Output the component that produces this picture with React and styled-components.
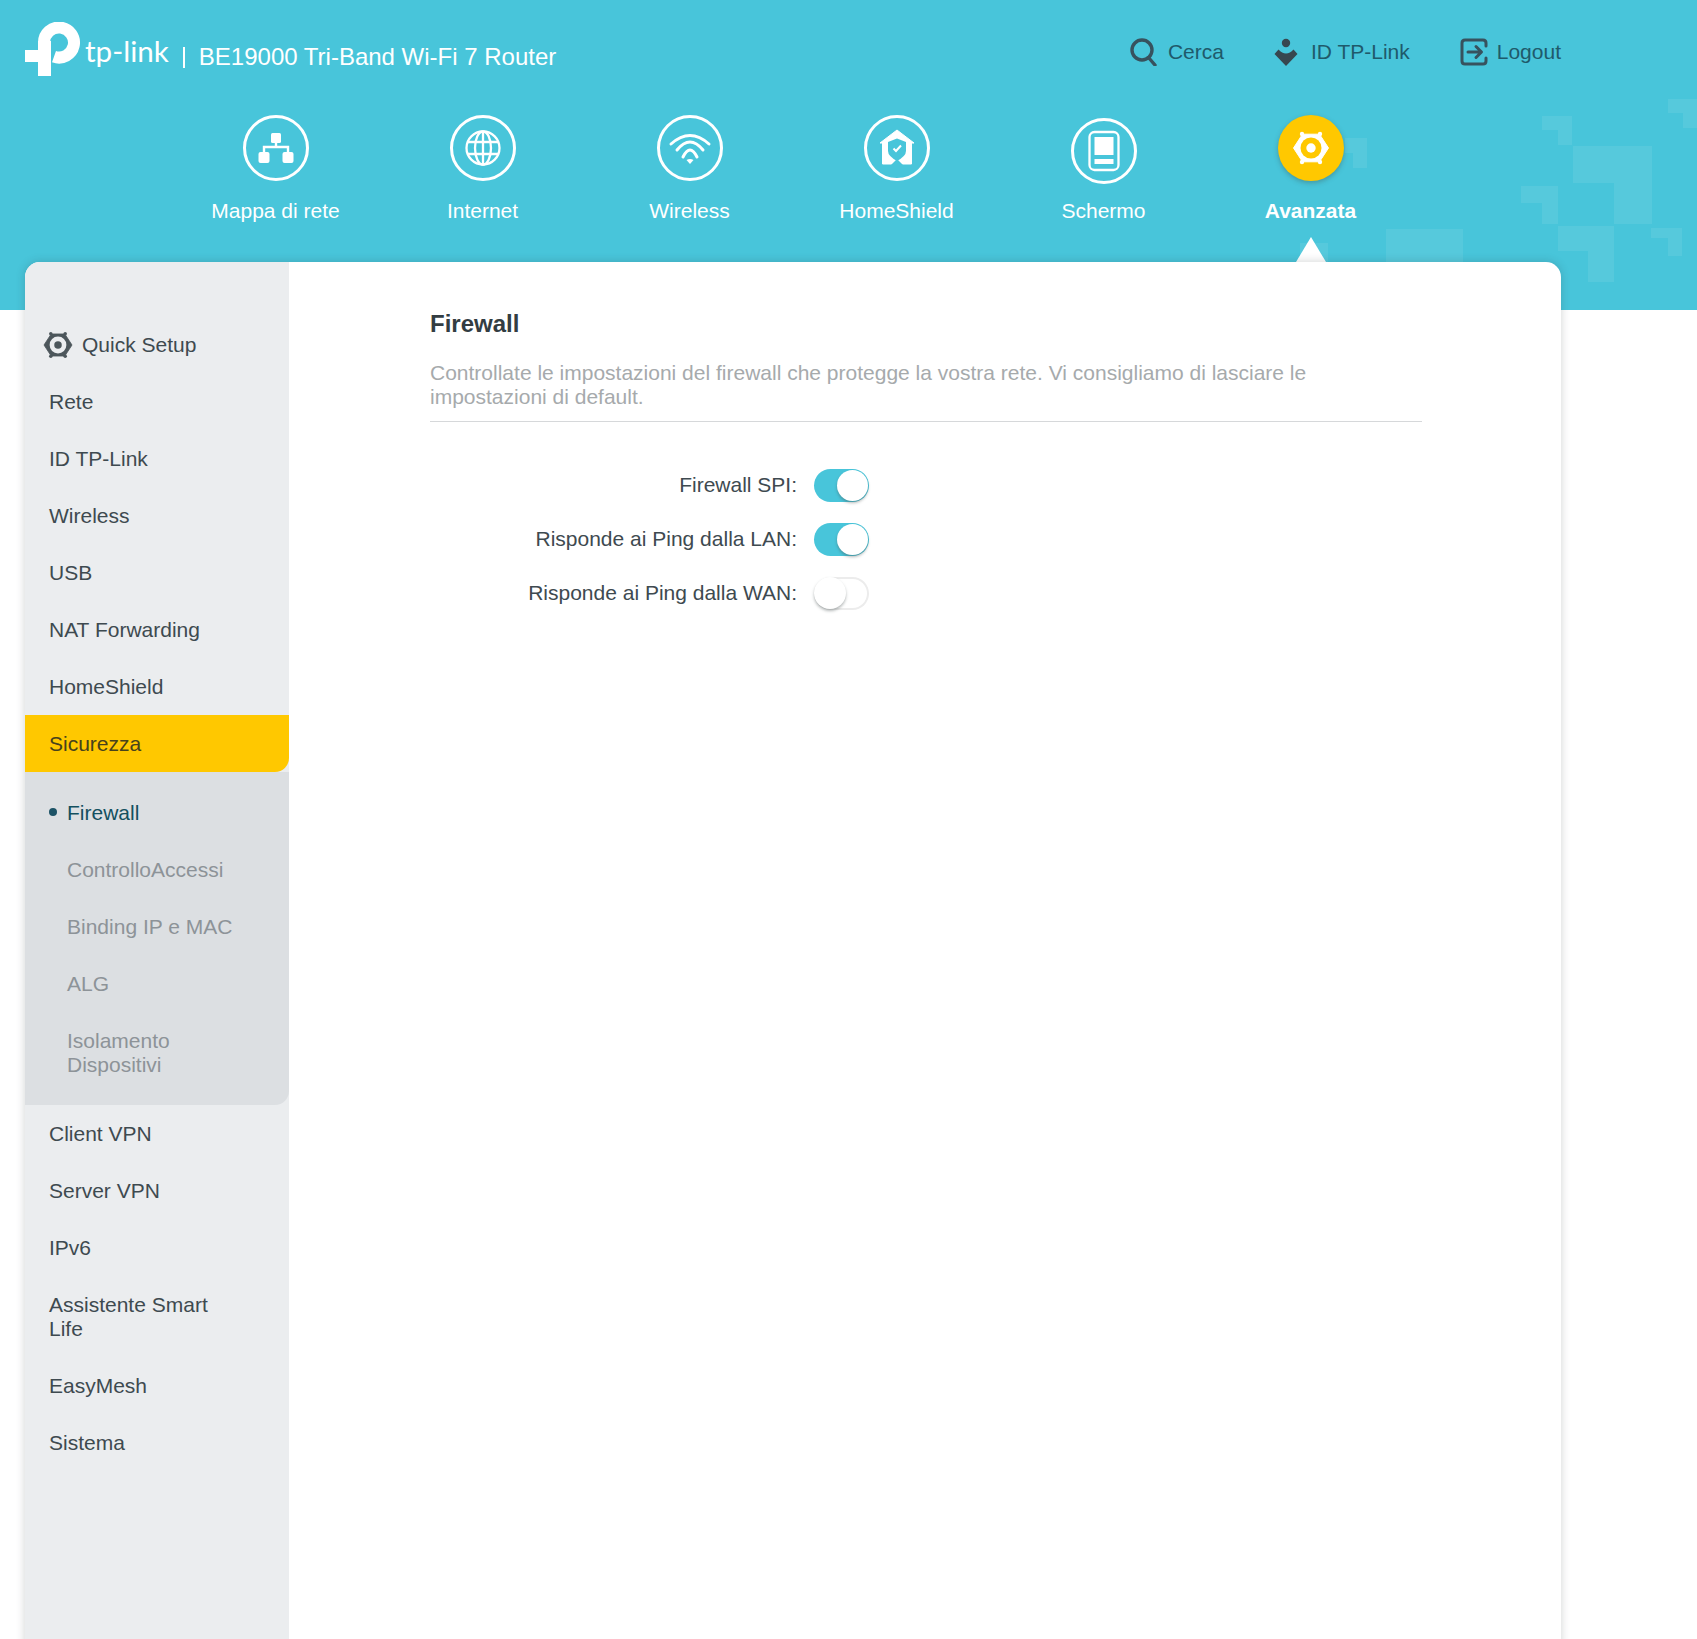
import React from 'react';
import styled, { createGlobalStyle } from 'styled-components';

const TEAL = '#48c5da';
const YELLOW = '#ffc800';
const INK = '#3e4a50';

const GlobalStyle = createGlobalStyle`
  html, body {
    margin: 0;
    padding: 0;
    background: #fff;
  }
  body {
    font-family: 'Liberation Sans', Arial, sans-serif;
    color: ${INK};
  }
  * {
    box-sizing: border-box;
  }
`;

const Page = styled.div`
  width: 1697px;
  height: 1639px;
  overflow: hidden;
`;

const Header = styled.header`
  position: relative;
  height: 310px;
  padding: 0 136px 0 25px;
  background: ${TEAL};
`;

const Pattern = styled.svg`
  position: absolute;
  top: 0;
  left: 0;
  pointer-events: none;
`;

const TopBar = styled.div`
  position: relative;
  display: flex;
  align-items: center;
  justify-content: space-between;
  height: 104px;
`;

const Brand = styled.div`
  display: flex;
  align-items: center;
  color: #fff;
  margin-top: -6px;
`;

const BrandName = styled.span`
  margin-left: 4px;
  padding-top: 4px;
  font-family: 'Lato', sans-serif;
  font-size: 29.6px;
  font-weight: 400;
  line-height: 34px;
`;

const Separator = styled.span`
  width: 2px;
  height: 21px;
  margin: 16px 14px 0 14px;
  background: #fff;
`;

const ProductName = styled.span`
  margin-top: 16px;
  font-size: 24px;
  line-height: 28px;
`;

const Actions = styled.div`
  display: flex;
  gap: 50px;
`;

const Action = styled.a`
  display: flex;
  align-items: center;
  gap: ${(p) => p.$gap}px;
  font-size: 21px;
  line-height: 28px;
  color: #1f5a6b;
`;

const Nav = styled.nav`
  position: relative;
  display: flex;
  justify-content: center;
  margin-top: 11px;
`;

const NavItem = styled.div`
  display: flex;
  flex-direction: column;
  align-items: center;
  width: 207px;
  color: #fff;
  font-size: 21px;
  font-weight: ${(p) => (p.$active ? 700 : 400)};
`;

const NavCircle = styled.div`
  display: flex;
  align-items: center;
  justify-content: center;
  width: 66px;
  height: 66px;
  margin-top: ${(p) => (p.$low ? 3 : 0)}px;
  margin-bottom: ${(p) => (p.$low ? -3 : 0)}px;
  border: ${(p) => (p.$active ? 'none' : '3px solid #fff')};
  border-radius: 50%;
  background: ${(p) => (p.$active ? YELLOW : 'transparent')};
  box-shadow: ${(p) => (p.$active ? '0 2px 5px rgba(60, 70, 60, 0.35)' : 'none')};
`;

const NavLabel = styled.span`
  margin-top: 18px;
  line-height: 24px;
`;

const Pointer = styled.span`
  position: absolute;
  top: 237px;
  left: 1296px;
  width: 0;
  height: 0;
  border-left: 15px solid transparent;
  border-right: 15px solid transparent;
  border-bottom: 25px solid #fff;
`;

const Card = styled.main`
  position: relative;
  display: flex;
  width: 1536px;
  height: 1400px;
  margin: -48px 0 0 25px;
  border-radius: 15px 15px 0 0;
  background: #fff;
  box-shadow: 0 0 10px rgba(40, 50, 60, 0.22);
  overflow: hidden;
`;

const Sidebar = styled.aside`
  flex: 0 0 264px;
  padding-top: 53.5px;
  background: #ebedef;
`;

const MenuItem = styled.div`
  display: flex;
  align-items: center;
  gap: 8px;
  padding: 17.5px 44px 15.5px ${(p) => (p.$icon ? 17 : 24)}px;
  font-size: 21px;
  line-height: 24px;
  color: ${(p) => (p.$active ? '#47421c' : INK)};
  background: ${(p) => (p.$active ? YELLOW : 'transparent')};
  border-bottom-right-radius: ${(p) => (p.$active ? 14 : 0)}px;

  svg {
    display: block;
    margin: -4px 0;
  }
`;

const SubMenu = styled.div`
  padding: 12px 0;
  background: #dcdfe2;
  border-bottom-right-radius: 14px;
`;

const SubItem = styled.div`
  position: relative;
  padding: 17.5px 44px 15.5px 42px;
  font-size: 21px;
  line-height: 24px;
  color: ${(p) => (p.$active ? '#13505f' : '#8d9398')};
`;

const SubDot = styled.span`
  position: absolute;
  top: 24.5px;
  left: 24px;
  width: 8px;
  height: 8px;
  border-radius: 50%;
  background: #1d5366;
`;

const Content = styled.section`
  flex: 1;
  padding: 48px 139px 0 141px;
`;

const Title = styled.h2`
  margin: 0;
  font-size: 24px;
  font-weight: 700;
  line-height: 28px;
  color: #333d42;
`;

const Description = styled.p`
  margin: 23px 0 0;
  padding-bottom: 12px;
  border-bottom: 1px solid #d6d8da;
  font-size: 21px;
  line-height: 24px;
  color: #a6aaac;

  span {
    display: block;
  }
`;

const Settings = styled.div`
  margin-top: 36px;
`;

const SettingRow = styled.div`
  display: flex;
  align-items: center;
  gap: 17px;
  height: 54px;
`;

const SettingLabel = styled.label`
  width: 367px;
  text-align: right;
  font-size: 21px;
  line-height: 24px;
  color: ${INK};
`;

const Toggle = styled.div`
  display: flex;
  justify-content: ${(p) => (p.$on ? 'flex-end' : 'flex-start')};
  width: 55px;
  height: 33px;
  padding: ${(p) => (p.$on ? '1px 1px 1px 0' : '0')};
  border-radius: 17px;
  background: ${(p) => (p.$on ? TEAL : '#fff')};
  box-shadow: ${(p) => (p.$on ? 'none' : 'inset 0 0 0 2px #ececec')};
`;

const Knob = styled.span`
  width: ${(p) => (p.$on ? 31 : 32)}px;
  height: ${(p) => (p.$on ? 31 : 32)}px;
  border-radius: 50%;
  background: #fff;
  box-shadow: 0 2px 3px rgba(70, 80, 80, 0.4);
`;

const patternShapes = [
  'M1668 99H1697V128H1683V113H1668Z',
  'M1542 116H1572V145H1558V130H1542Z',
  'M1573 146H1652V224H1614V183H1573Z',
  'M1521 186H1558V224H1542V203H1521Z',
  'M1558 226H1614V282H1588V251H1558Z',
  'M1651 228H1682V256H1668V238H1651Z',
  'M1386 229H1463V262H1386Z',
  'M1345 138H1367V168H1353V153H1345Z',
  'M1300 243H1328V262H1300Z',
];

const Logo = () => (
  <svg width="56" height="54" viewBox="0 0 56 54">
    <path d="M13 19H26V54H13ZM0 28H26V40H0Z" fill="#fff" />
    <path d="M19 20.5A15 15 0 1 1 29 34.7" fill="none" stroke="#fff" strokeWidth="12" />
  </svg>
);

const SearchIcon = () => (
  <svg width="28" height="28" viewBox="0 0 28 28" fill="none" stroke="#37525e" strokeWidth="3.4">
    <circle cx="13" cy="12" r="10" />
    <path d="M19.5 19.5L26 27" strokeLinecap="round" />
  </svg>
);

const AccountIcon = () => (
  <svg width="24" height="30" viewBox="0 0 24 30" fill="#37474f">
    <circle cx="12" cy="6" r="4.2" />
    <path d="M0.5 17L4.5 12.5Q8 16.5 12 16.5Q16 16.5 19.5 12.5L23.5 17L12 29Z" />
  </svg>
);

const LogoutIcon = () => (
  <svg width="28" height="28" viewBox="0 0 28 28" fill="none" stroke="#37525e" strokeWidth="3" strokeLinecap="round" strokeLinejoin="round">
    <path d="M26 8V5Q26 2 23 2H5Q2 2 2 5V23Q2 26 5 26H23Q26 26 26 23V20" />
    <path d="M8 14H21M16 8.5L21.5 14L16 19.5" />
  </svg>
);

const GearGlyph = ({ size, color, hole }) => (
  <svg width={size} height={size} viewBox="-20 -20 40 40">
    <path d="M-17.5 0L-8.5 -13.8H8.5L17.5 0L8.5 13.8H-8.5Z" fill={color} stroke={color} strokeWidth="1" strokeLinejoin="round" />
    <circle cx="-9" cy="-14" r="2.2" fill={color} />
    <circle cx="9" cy="-14" r="2.2" fill={color} />
    <circle cx="-9" cy="14" r="2.2" fill={color} />
    <circle cx="9" cy="14" r="2.2" fill={color} />
    <circle r="10.5" fill={hole} />
    <circle r="4.7" fill={color} />
  </svg>
);

const NavGlyph = ({ children }) => (
  <svg width="60" height="60" viewBox="-30 -30 60 60" fill="#fff">
    {children}
  </svg>
);

const navItems = [
  {
    label: 'Mappa di rete',
    glyph: (
      <NavGlyph>
        <rect x="-5" y="-15" width="10" height="10" rx="1.5" />
        <rect x="-17.5" y="4" width="11" height="11" rx="2" />
        <rect x="6.5" y="4" width="11" height="11" rx="2" />
        <path d="M0 -6V-1M-12 5V-1H12V5" fill="none" stroke="#fff" strokeWidth="2.4" />
      </NavGlyph>
    ),
  },
  {
    label: 'Internet',
    glyph: (
      <NavGlyph>
        <g fill="none" stroke="#fff" strokeWidth="2.3">
          <circle r="16.5" />
          <ellipse rx="8" ry="16.5" />
          <path d="M0 -16.5V16.5M-15 -6H15M-15 6H15" />
        </g>
      </NavGlyph>
    ),
  },
  {
    label: 'Wireless',
    glyph: (
      <NavGlyph>
        <g fill="none" stroke="#fff" strokeWidth="3" strokeLinecap="round">
          <path d="M-19 -4Q0 -21 19 -4" />
          <path d="M-13 2Q0 -14 13 2" />
          <path d="M-7 9Q0 -5 7 9" />
        </g>
        <path d="M-3.5 12Q0 10 3.5 12L0 16Z" />
      </NavGlyph>
    ),
  },
  {
    label: 'HomeShield',
    glyph: (
      <NavGlyph>
        <path d="M0 -18L17 -5H14.5V16H-14.5V-5H-17Z" stroke="#fff" strokeWidth="1" strokeLinejoin="round" />
        <path d="M-9 -6L0 -9.5L9 -6V3Q9 8 0 13Q-9 8 -9 3Z" fill={TEAL} />
        <path d="M-6 17L0 11L6 17Z" fill={TEAL} />
        <path d="M-3.5 0.5L-1 3L4 -2.5" fill="none" stroke="#fff" strokeWidth="2" />
      </NavGlyph>
    ),
  },
  {
    label: 'Schermo',
    low: true,
    glyph: (
      <NavGlyph>
        <rect x="-14.5" y="-19" width="29" height="38" rx="5" fill="none" stroke="#fff" strokeWidth="2.3" />
        <rect x="-9.5" y="-14" width="19" height="18" />
        <rect x="-9.5" y="8" width="19" height="5" />
      </NavGlyph>
    ),
  },
  {
    label: 'Avanzata',
    active: true,
    glyph: <GearGlyph size={40} color="#fff" hole={YELLOW} />,
  },
];

const topMenu = ['Rete', 'ID TP-Link', 'Wireless', 'USB', 'NAT Forwarding', 'HomeShield'];
const securityMenu = ['ControlloAccessi', 'Binding IP e MAC', 'ALG', 'Isolamento Dispositivi'];
const bottomMenu = ['Client VPN', 'Server VPN', 'IPv6', 'Assistente Smart Life', 'EasyMesh', 'Sistema'];

const settings = [
  { label: 'Firewall SPI:', on: true },
  { label: 'Risponde ai Ping dalla LAN:', on: true },
  { label: 'Risponde ai Ping dalla WAN:', on: false },
];

export default function App() {
  return (
    <Page>
      <GlobalStyle />
      <Header>
        <Pattern width="1697" height="310" viewBox="0 0 1697 310" fill="#fff" fillOpacity="0.08">
          {patternShapes.map((d) => (
            <path key={d} d={d} />
          ))}
        </Pattern>
        <TopBar>
          <Brand>
            <Logo />
            <BrandName>tp-link</BrandName>
            <Separator />
            <ProductName>BE19000 Tri-Band Wi-Fi 7 Router</ProductName>
          </Brand>
          <Actions>
            <Action $gap={11}>
              <SearchIcon />
              Cerca
            </Action>
            <Action $gap={13}>
              <AccountIcon />
              ID TP-Link
            </Action>
            <Action $gap={9}>
              <LogoutIcon />
              Logout
            </Action>
          </Actions>
        </TopBar>
        <Nav>
          {navItems.map((item) => (
            <NavItem key={item.label} $active={item.active}>
              <NavCircle $active={item.active} $low={item.low}>
                {item.glyph}
              </NavCircle>
              <NavLabel>{item.label}</NavLabel>
            </NavItem>
          ))}
        </Nav>
        <Pointer />
      </Header>
      <Card>
        <Sidebar>
          <MenuItem $icon>
            <GearGlyph size={32} color="#4c565b" hole="#ebedef" />
            Quick Setup
          </MenuItem>
          {topMenu.map((name) => (
            <MenuItem key={name}>{name}</MenuItem>
          ))}
          <MenuItem $active>Sicurezza</MenuItem>
          <SubMenu>
            <SubItem $active>
              <SubDot />
              Firewall
            </SubItem>
            {securityMenu.map((name) => (
              <SubItem key={name}>{name}</SubItem>
            ))}
          </SubMenu>
          {bottomMenu.map((name) => (
            <MenuItem key={name}>{name}</MenuItem>
          ))}
        </Sidebar>
        <Content>
          <Title>Firewall</Title>
          <Description>
            <span>Controllate le impostazioni del firewall che protegge la vostra rete. Vi consigliamo di lasciare le</span>
            <span>impostazioni di default.</span>
          </Description>
          <Settings>
            {settings.map((row) => (
              <SettingRow key={row.label}>
                <SettingLabel>{row.label}</SettingLabel>
                <Toggle $on={row.on}>
                  <Knob $on={row.on} />
                </Toggle>
              </SettingRow>
            ))}
          </Settings>
        </Content>
      </Card>
    </Page>
  );
}
